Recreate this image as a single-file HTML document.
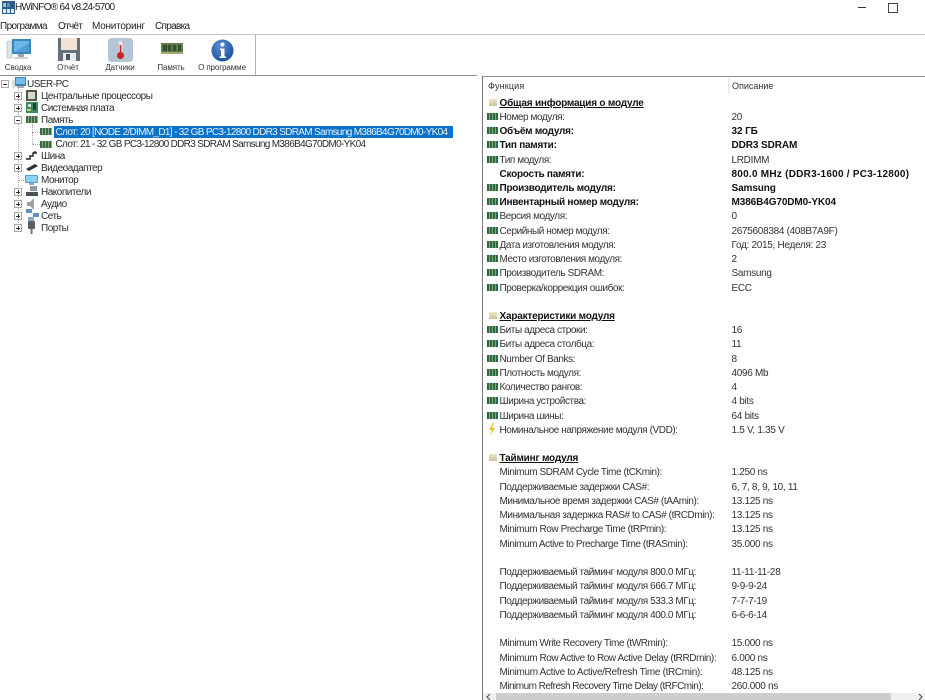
<!DOCTYPE html>
<html><head><meta charset="utf-8"><style>
html,body{margin:0;padding:0;background:#fff}
body{width:925px;height:700px;position:relative;overflow:hidden;font-family:"Liberation Sans",sans-serif;font-size:10px;color:#222}
.a{position:absolute;white-space:nowrap}
.t{position:absolute;white-space:nowrap;line-height:12px;height:12px;margin-top:1px;color:#2c2c2c;font-size:10px;letter-spacing:-.5px}
.t.sl{letter-spacing:-.67px}
.f{position:absolute;left:499.5px;white-space:nowrap;line-height:14px;height:14px;margin-top:1px;color:#333;font-size:10px;letter-spacing:-.42px}
.v{position:absolute;left:731.5px;white-space:nowrap;line-height:14px;height:14px;margin-top:1px;color:#333;font-size:10px;letter-spacing:-.3px}
.f.b{font-weight:bold;color:#111;letter-spacing:-.25px}
.v.b{font-weight:bold;color:#111;letter-spacing:-.1px}
.f.h{font-weight:bold;color:#111;text-decoration:underline;letter-spacing:-.2px}
.r{position:absolute;left:487px;width:11px;height:7px;background:repeating-linear-gradient(90deg,#2f6b3c 0 2px,#7fa583 2px 3px)}
.s{position:absolute;left:489px;width:8px;height:7px;background:linear-gradient(#efe6c4,#c9c19c)}
.m{position:absolute;width:12px;height:7px;background:repeating-linear-gradient(90deg,#3a6b42 0 2px,#88a88a 2px 3px)}
.p{position:absolute;width:8px;height:8px;border:1px solid #a8a8a8;background:#fff;box-sizing:border-box;left:14px}
.p:before{content:"";position:absolute;left:1px;top:2.5px;width:4px;height:1px;background:#333}
.p.c:after{content:"";position:absolute;left:2.5px;top:1px;width:1px;height:4px;background:#333}
.tb{position:absolute;top:62px;line-height:11px;font-size:8px;letter-spacing:-.1px;color:#333;text-align:center}
.mn{position:absolute;top:20px;line-height:13px;font-size:10px;color:#222}
</style></head><body>

<svg class="a" style="left:2px;top:1px" width="13" height="13" viewBox="0 0 13 13"><rect width="13" height="13" fill="#2f5d88"/><rect x="1" y="2" width="3" height="4" fill="#8fc2e6"/><rect x="5" y="2" width="3" height="4" fill="#5d93bd"/><rect x="1" y="8" width="11" height="4" fill="#dfe9f1"/><rect x="4" y="8" width="1" height="4" fill="#2f5d88"/><rect x="8" y="8" width="1" height="4" fill="#2f5d88"/></svg>
<div class="a" style="left:15px;top:1px;line-height:14px;font-size:10px;color:#222;letter-spacing:-.7px">HWiNFO® 64 v8.24-5700</div>

<div class="a" style="left:858px;top:7px;width:8px;height:1px;background:#333"></div>
<div class="a" style="left:888px;top:3px;width:8px;height:8px;border:1px solid #444;box-sizing:content-box"></div>

<div class="mn" style="left:0;letter-spacing:-.6px">Программа</div>
<div class="mn" style="left:58px;letter-spacing:-.7px">Отчёт</div>
<div class="mn" style="left:92px;letter-spacing:-.25px">Мониторинг</div>
<div class="mn" style="left:155px;letter-spacing:-.7px">Справка</div>

<div class="a" style="left:0;top:34px;width:925px;height:1px;background:#c4c4c4"></div>
<div class="a" style="left:255px;top:35px;width:1px;height:40px;background:#b5b5b5"></div>

<!-- toolbar icons -->
<svg class="a" style="left:6px;top:38px" width="26" height="24" viewBox="0 0 26 24"><rect x="1" y="3" width="5" height="17" rx="1" fill="#dfe3e6" stroke="#a9b0b5" stroke-width=".6"/><rect x="6" y="1" width="19" height="15" fill="#3f86b8"/><rect x="8" y="3" width="15" height="11" fill="#69b8ea"/><path d="M8 14 L23 5 V14Z" fill="#4f9fd8"/><rect x="12" y="16" width="6" height="3" fill="#9fa6aa"/><rect x="8" y="19" width="14" height="2" rx="1" fill="#cfd3d6"/></svg>
<svg class="a" style="left:57px;top:37px" width="24" height="25" viewBox="0 0 24 25"><path d="M1 1H23V24H1Z" fill="#66707a"/><rect x="4" y="1" width="16" height="12" fill="#f4e2d4"/><rect x="6" y="16" width="13" height="8" fill="#e8eaec"/><rect x="9" y="17" width="4" height="6" fill="#4a5560"/></svg>
<svg class="a" style="left:108px;top:38px" width="25" height="24" viewBox="0 0 25 24"><rect x=".5" y=".5" width="24" height="23" rx="3" fill="#b4c6d6" stroke="#9fb1c0" stroke-width=".6"/><rect x="10.8" y="3" width="3.4" height="13" rx="1.7" fill="#f3e5e2"/><rect x="11.7" y="7" width="1.6" height="10" fill="#c4262a"/><circle cx="12.5" cy="17.5" r="3.6" fill="#c4262a"/></svg>
<svg class="a" style="left:161px;top:43px" width="22" height="12" viewBox="0 0 22 12"><rect width="22" height="11" fill="#5f7c4c"/><rect y="9" width="22" height="2" fill="#a3a875"/><rect x="2" y="2" width="4" height="6" fill="#35502f"/><rect x="7" y="2" width="3" height="6" fill="#35502f"/><rect x="12" y="2" width="3" height="6" fill="#35502f"/><rect x="17" y="2" width="3" height="6" fill="#35502f"/></svg>
<svg class="a" style="left:211px;top:39px" width="23" height="23" viewBox="0 0 23 23"><defs><radialGradient id="g" cx=".4" cy=".3" r=".8"><stop offset="0" stop-color="#5a8fd0"/><stop offset="1" stop-color="#164a94"/></radialGradient></defs><circle cx="11.5" cy="11.5" r="11" fill="url(#g)"/><circle cx="11.5" cy="5.5" r="2" fill="#fff"/><path d="M9 9.5H13.5V17.5H15V19H8.5V17.5H10V11H9Z" fill="#fff"/></svg>

<div class="tb" style="left:0;width:36px">Сводка</div>
<div class="tb" style="left:50px;width:36px">Отчёт</div>
<div class="tb" style="left:100px;width:40px">Датчики</div>
<div class="tb" style="left:152px;width:38px">Память</div>
<div class="tb" style="left:195px;width:54px">О программе</div>

<!-- pane frames -->
<div class="a" style="left:0;top:75px;width:477px;height:1px;background:#8e8e8e"></div>
<div class="a" style="left:482px;top:76px;width:443px;height:1px;background:#8e8e8e"></div>
<div class="a" style="left:482px;top:76px;width:1px;height:624px;background:#777"></div>
<div class="a" style="left:728px;top:78px;width:1px;height:17px;background:#e6e6e6"></div>
<div class="a" style="left:488px;top:80px;line-height:13px;font-size:9px;color:#333;letter-spacing:.15px">Функция</div>
<div class="a" style="left:732px;top:80px;line-height:13px;font-size:9px;color:#333;letter-spacing:0">Описание</div>

<!-- tree lines -->
<div class="a" style="left:18px;top:88px;height:135px;border-left:1px dotted #aaa"></div>
<div class="a" style="left:32px;top:124px;height:20px;border-left:1px dotted #aaa"></div>
<div class="a" style="left:32px;top:132px;width:8px;border-top:1px dotted #aaa"></div>
<div class="a" style="left:32px;top:144px;width:8px;border-top:1px dotted #aaa"></div>
<div class="a" style="left:18px;top:180px;width:8px;border-top:1px dotted #aaa"></div>

<div class="p" style="left:1px;top:80px"></div>
<div class="p c" style="top:92px"></div>
<div class="p c" style="top:104px"></div>
<div class="p" style="top:116px"></div>
<div class="p c" style="top:152px"></div>
<div class="p c" style="top:164px"></div>
<div class="p c" style="top:188px"></div>
<div class="p c" style="top:200px"></div>
<div class="p c" style="top:212px"></div>
<div class="p c" style="top:224px"></div>

<!-- tree icons -->
<svg class="a" style="left:12px;top:77px" width="14" height="12" viewBox="0 0 14 12"><rect x="0" y="3" width="3" height="8" fill="#d8dde0"/><rect x="3" y="0" width="11" height="9" fill="#3f86b8"/><rect x="4" y="1" width="9" height="6" fill="#77bde8"/><rect x="5" y="9" width="7" height="2" fill="#a8adb0"/></svg>
<svg class="a" style="left:26px;top:90px" width="11" height="11" viewBox="0 0 11 11"><rect width="11" height="11" fill="#4d5a44"/><rect x="2" y="2" width="7" height="7" fill="#d6d9cd"/></svg>
<svg class="a" style="left:26px;top:102px" width="12" height="11" viewBox="0 0 12 11"><rect width="12" height="11" fill="#3c8a5c"/><rect x="2" y="2" width="3" height="3" fill="#cfe8d6"/><rect x="7" y="1" width="3" height="7" fill="#17492e"/><rect x="1" y="7" width="4" height="2" fill="#d9cc74"/></svg>
<div class="m" style="left:26px;top:116px"></div>
<div class="m" style="left:40px;top:128px"></div>
<div class="m" style="left:40px;top:141px"></div>
<svg class="a" style="left:26px;top:150px" width="12" height="11" viewBox="0 0 12 11"><path d="M0 9H4V6H7V3H9V1M9 3H11" fill="none" stroke="#222" stroke-width="1.4"/></svg>
<svg class="a" style="left:25px;top:163px" width="14" height="9" viewBox="0 0 14 9"><path d="M1 6 L10 1 L13 3 L4 8Z" fill="#3a2d2a"/></svg>
<svg class="a" style="left:25px;top:175px" width="13" height="10" viewBox="0 0 13 10"><rect width="13" height="8" rx="1" fill="#4f9fd8"/><rect x="1" y="1" width="11" height="6" fill="#8fd0f4"/><rect x="4" y="8" width="5" height="2" fill="#9aa"/></svg>
<svg class="a" style="left:26px;top:186px" width="12" height="11" viewBox="0 0 12 11"><rect x="4" y="0" width="7" height="5" fill="#8f9aa4"/><rect x="0" y="6" width="12" height="4" fill="#47525c"/></svg>
<svg class="a" style="left:27px;top:198px" width="9" height="12" viewBox="0 0 9 12"><path d="M0 4H3L7 0V12L3 8H0Z" fill="#9aa39c"/></svg>
<svg class="a" style="left:26px;top:209px" width="13" height="13" viewBox="0 0 13 13"><rect x="0" y="0" width="6" height="4" fill="#5c8fc4"/><rect x="7" y="4" width="6" height="4" fill="#5c8fc4"/><rect x="2" y="8" width="6" height="4" fill="#8fa9c4"/></svg>
<svg class="a" style="left:28px;top:221px" width="7" height="13" viewBox="0 0 7 13"><rect x="0" y="0" width="7" height="8" rx="1" fill="#5c6066"/><rect x="2.5" y="8" width="2" height="5" fill="#777"/></svg>

<!-- tree text -->
<div class="t" style="left:27px;top:78px">USER-PC</div>
<div class="t" style="left:41px;top:90px">Центральные процессоры</div>
<div class="t" style="left:41px;top:102px">Системная плата</div>
<div class="t" style="left:41px;top:114px">Память</div>
<div class="a" style="left:54px;top:126px;width:399px;height:12px;background:#0a72c9"></div>
<div class="t sl" style="left:55.5px;top:126px;color:#e8f3fb">Слот: 20 [NODE 2/DIMM_D1] - 32 GB PC3-12800 DDR3 SDRAM Samsung M386B4G70DM0-YK04</div>
<div class="t sl" style="left:55.5px;top:138px">Слот: 21 - 32 GB PC3-12800 DDR3 SDRAM Samsung M386B4G70DM0-YK04</div>
<div class="t" style="left:41px;top:150px">Шина</div>
<div class="t" style="left:41px;top:162px">Видеоадаптер</div>
<div class="t" style="left:41px;top:174px">Монитор</div>
<div class="t" style="left:41px;top:186px">Накопители</div>
<div class="t" style="left:41px;top:198px">Аудио</div>
<div class="t" style="left:41px;top:210px">Сеть</div>
<div class="t" style="left:41px;top:222px">Порты</div>

<!-- right list -->
<div class="s" style="top:99px"></div><div class="f h" style="top:96px">Общая информация о модуле</div>
<div class="r" style="top:113px"></div><div class="f" style="top:110px">Номер модуля:</div><div class="v" style="top:110px">20</div>
<div class="r" style="top:127px"></div><div class="f b" style="top:124px">Объём модуля:</div><div class="v b" style="top:124px">32 ГБ</div>
<div class="r" style="top:141px"></div><div class="f b" style="top:138px">Тип памяти:</div><div class="v b" style="top:138px">DDR3 SDRAM</div>
<div class="r" style="top:156px"></div><div class="f" style="top:153px">Тип модуля:</div><div class="v" style="top:153px">LRDIMM</div>
<div class="f b" style="top:167px">Скорость памяти:</div><div class="v b" style="top:167px;letter-spacing:.25px">800.0 MHz (DDR3-1600 / PC3-12800)</div>
<div class="r" style="top:184px"></div><div class="f b" style="top:181px">Производитель модуля:</div><div class="v b" style="top:181px">Samsung</div>
<div class="r" style="top:198px"></div><div class="f b" style="top:195px">Инвентарный номер модуля:</div><div class="v b" style="top:195px">M386B4G70DM0-YK04</div>
<div class="r" style="top:212px"></div><div class="f" style="top:209px">Версия модуля:</div><div class="v" style="top:209px">0</div>
<div class="r" style="top:227px"></div><div class="f" style="top:224px">Серийный номер модуля:</div><div class="v" style="top:224px">2675608384 (408B7A9F)</div>
<div class="r" style="top:241px"></div><div class="f" style="top:238px">Дата изготовления модуля:</div><div class="v" style="top:238px">Год: 2015, Неделя: 23</div>
<div class="r" style="top:255px"></div><div class="f" style="top:252px">Место изготовления модуля:</div><div class="v" style="top:252px">2</div>
<div class="r" style="top:269px"></div><div class="f" style="top:266px">Производитель SDRAM:</div><div class="v" style="top:266px">Samsung</div>
<div class="r" style="top:284px"></div><div class="f" style="top:281px">Проверка/коррекция ошибок:</div><div class="v" style="top:281px">ECC</div>

<div class="s" style="top:312px"></div><div class="f h" style="top:309px">Характеристики модуля</div>
<div class="r" style="top:326px"></div><div class="f" style="top:323px">Биты адреса строки:</div><div class="v" style="top:323px">16</div>
<div class="r" style="top:340px"></div><div class="f" style="top:337px">Биты адреса столбца:</div><div class="v" style="top:337px">11</div>
<div class="r" style="top:355px"></div><div class="f" style="top:352px">Number Of Banks:</div><div class="v" style="top:352px">8</div>
<div class="r" style="top:369px"></div><div class="f" style="top:366px">Плотность модуля:</div><div class="v" style="top:366px">4096 Mb</div>
<div class="r" style="top:383px"></div><div class="f" style="top:380px">Количество рангов:</div><div class="v" style="top:380px">4</div>
<div class="r" style="top:397px"></div><div class="f" style="top:394px">Ширина устройства:</div><div class="v" style="top:394px">4 bits</div>
<div class="r" style="top:412px"></div><div class="f" style="top:409px">Ширина шины:</div><div class="v" style="top:409px">64 bits</div>
<svg class="a" style="left:488px;top:423px" width="8" height="13" viewBox="0 0 8 13"><path d="M5 0 L1 7 H4 L2 13 L7 5 H4 L6 0Z" fill="#e8c020"/></svg>
<div class="f" style="top:423px">Номинальное напряжение модуля (VDD):</div><div class="v" style="top:423px">1.5 V, 1.35 V</div>

<div class="s" style="top:454px"></div><div class="f h" style="top:451px">Тайминг модуля</div>
<div class="f" style="top:465px">Minimum SDRAM Cycle Time (tCKmin):</div><div class="v" style="top:465px">1.250 ns</div>
<div class="f" style="top:480px">Поддерживаемые задержки CAS#:</div><div class="v" style="top:480px">6, 7, 8, 9, 10, 11</div>
<div class="f" style="top:494px">Минимальное время задержки CAS# (tAAmin):</div><div class="v" style="top:494px">13.125 ns</div>
<div class="f" style="top:508px">Минимальная задержка RAS# to CAS# (tRCDmin):</div><div class="v" style="top:508px">13.125 ns</div>
<div class="f" style="top:522px">Minimum Row Precharge Time (tRPmin):</div><div class="v" style="top:522px">13.125 ns</div>
<div class="f" style="top:537px">Minimum Active to Precharge Time (tRASmin):</div><div class="v" style="top:537px">35.000 ns</div>

<div class="f" style="top:565px">Поддерживаемый тайминг модуля 800.0 МГц:</div><div class="v" style="top:565px">11-11-11-28</div>
<div class="f" style="top:579px">Поддерживаемый тайминг модуля 666.7 МГц:</div><div class="v" style="top:579px">9-9-9-24</div>
<div class="f" style="top:594px">Поддерживаемый тайминг модуля 533.3 МГц:</div><div class="v" style="top:594px">7-7-7-19</div>
<div class="f" style="top:608px">Поддерживаемый тайминг модуля 400.0 МГц:</div><div class="v" style="top:608px">6-6-6-14</div>

<div class="f" style="top:636px">Minimum Write Recovery Time (tWRmin):</div><div class="v" style="top:636px">15.000 ns</div>
<div class="f" style="top:651px">Minimum Row Active to Row Active Delay (tRRDmin):</div><div class="v" style="top:651px">6.000 ns</div>
<div class="f" style="top:665px;letter-spacing:-.33px">Minimum Active to Active/Refresh Time (tRCmin):</div><div class="v" style="top:665px">48.125 ns</div>
<div class="f" style="top:679px;letter-spacing:-.52px">Minimum Refresh Recovery Time Delay (tRFCmin):</div><div class="v" style="top:679px">260.000 ns</div>

<!-- scrollbar -->
<div class="a" style="left:483px;top:693px;width:442px;height:7px;background:#f0f0f0"></div>
<div class="a" style="left:496px;top:693px;width:395px;height:7px;background:#cdcdcd"></div>
<svg class="a" style="left:486px;top:694px" width="6" height="6" viewBox="0 0 6 6"><path d="M4 0 L1 3 L4 6" fill="none" stroke="#444"/></svg>
<svg class="a" style="left:918px;top:694px" width="6" height="6" viewBox="0 0 6 6"><path d="M1 0 L4 3 L1 6" fill="none" stroke="#444"/></svg>
</body></html>
